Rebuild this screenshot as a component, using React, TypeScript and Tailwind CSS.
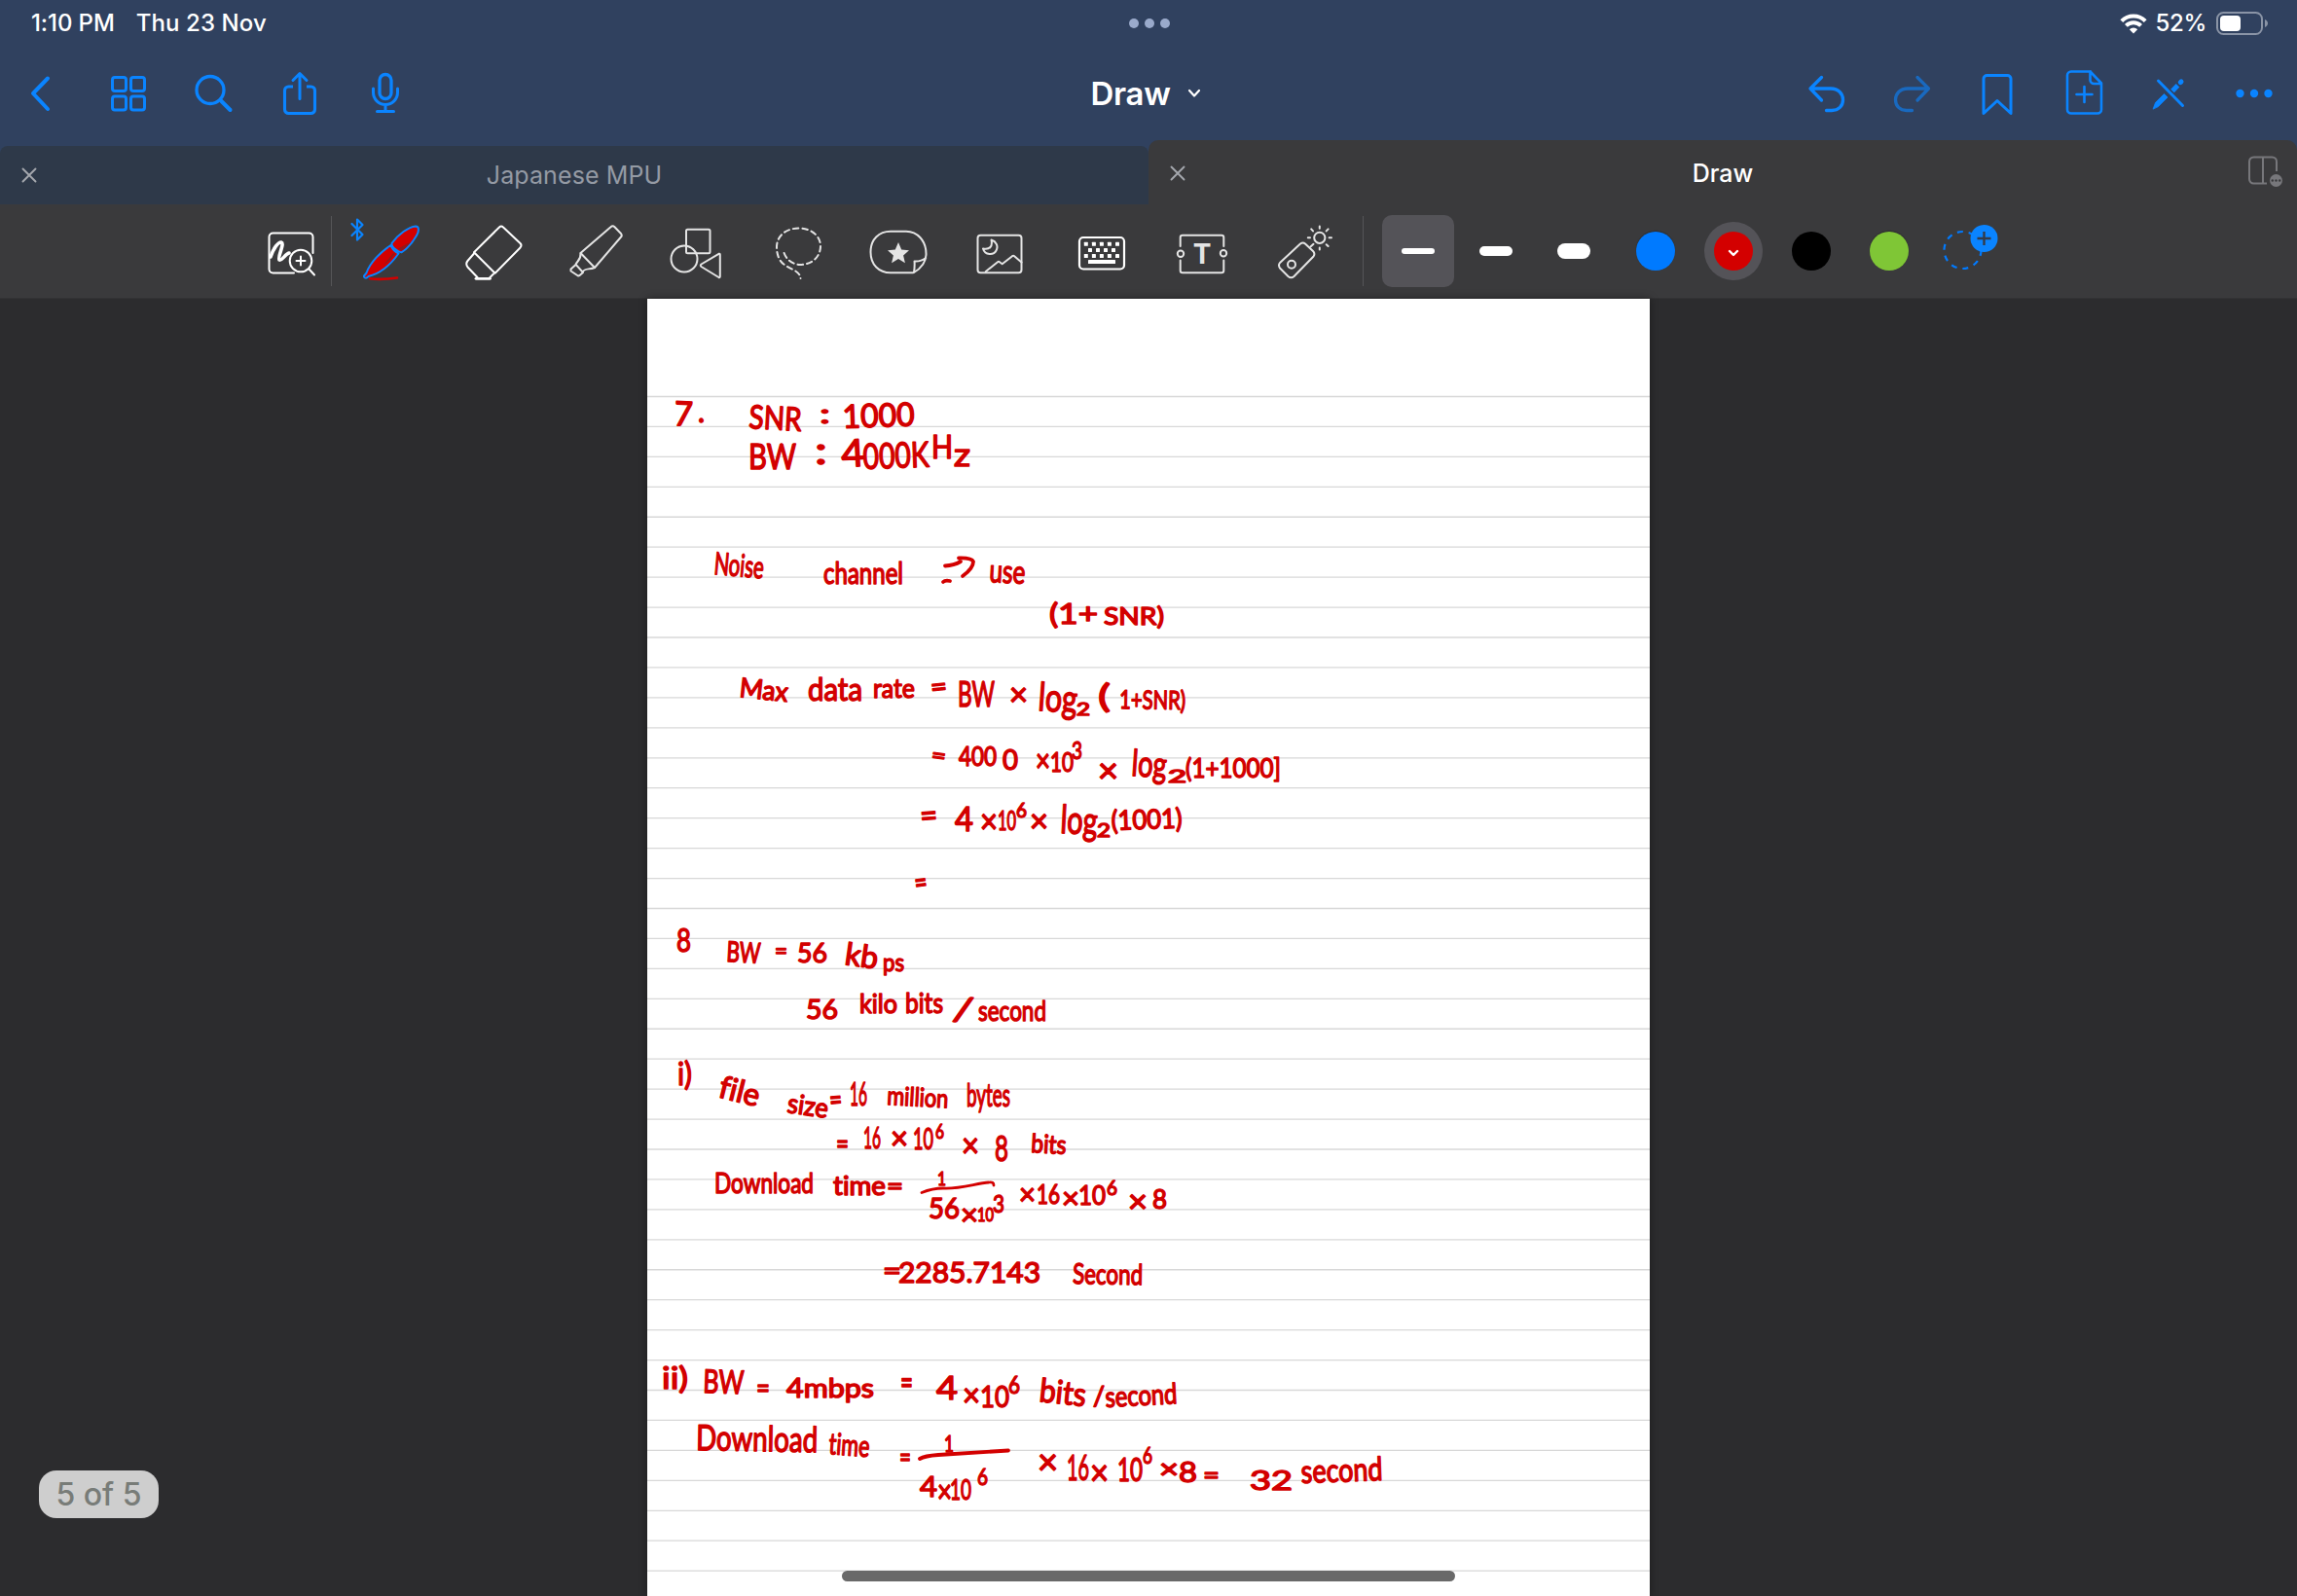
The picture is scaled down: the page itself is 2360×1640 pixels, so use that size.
import React from 'react';

const BLUE = '#0a84ff';

function NavIcon({ children, dim }: { children: React.ReactNode; dim?: boolean }) {
  return (
    <button className={dim ? 'h-24 w-[88px] shrink-0 opacity-60' : 'h-24 w-[88px] shrink-0'}>
      <svg viewBox="0 0 88 96" className="h-24 w-[88px]" fill="none" stroke={BLUE} strokeWidth="3.3" strokeLinecap="round" strokeLinejoin="round">
        {children}
      </svg>
    </button>
  );
}

function Tool({ children, bright }: { children: React.ReactNode; bright?: boolean }) {
  return (
    <button className="h-[97px] w-[104px] shrink-0">
      <svg viewBox="0 0 104 97" className="h-[97px] w-[104px]" fill="none" stroke={bright ? '#ffffff' : '#e4e4e4'} strokeWidth="2" strokeLinecap="round" strokeLinejoin="round">
        {children}
      </svg>
    </button>
  );
}

function StatusBar() {
  return (
    <div className="grid h-12 grid-cols-3 items-center pl-8 pr-[29px] text-2xl font-medium text-white">
      <div className="flex gap-[22px] whitespace-nowrap text-[24px]">
        <span className="tracking-[-0.1px]">1:10 PM</span>
        <span className="tracking-[0.1px]">Thu 23 Nov</span>
      </div>
      <div className="flex justify-center gap-1.5">
        <span className="size-2.5 rounded-full bg-[#9aaacb]" />
        <span className="size-2.5 rounded-full bg-[#9aaacb]" />
        <span className="size-2.5 rounded-full bg-[#9aaacb]" />
      </div>
      <div className="flex items-center justify-end">
        <svg viewBox="0 0 28 21" className="h-[21px] w-7" fill="none" stroke="#fff" strokeWidth="4">
          <path d="M1.8 7.6a17.3 17.3 0 0 1 24.4 0" />
          <path d="M6.4 12.4a10.8 10.8 0 0 1 15.2 0" />
          <path d="M14 20.5l-4.2-4.2a6 6 0 0 1 8.400 0z" fill="#fff" stroke="none" />
        </svg>
        <span className="ml-2 text-[24px] tracking-[-0.3px]">52%</span>
        <svg viewBox="0 0 54 24" className="ml-2.5 h-6 w-[54px]">
          <rect x="1" y="1" width="46" height="22" rx="6.5" fill="none" stroke="#8a94a6" strokeWidth="2" />
          <rect x="4" y="4" width="21" height="16" rx="4" fill="#fff" />
          <path d="M50 8c4 1.500 4 6.500 0 8z" fill="#8a94a6" />
        </svg>
      </div>
    </div>
  );
}

function NavBar() {
  return (
    <div className="grid h-24 grid-cols-3 items-center">
      <div className="flex">
        <NavIcon><path d="M49 32.500L34 48L49 64" strokeWidth="4" /></NavIcon>
        <NavIcon>
          <rect x="27.500" y="31.500" width="14" height="14" rx="2.500" strokeWidth="3" />
          <rect x="46.500" y="31.500" width="14" height="14" rx="2.500" strokeWidth="3" />
          <rect x="27.500" y="51" width="14" height="14" rx="2.500" strokeWidth="3" />
          <rect x="46.500" y="51" width="14" height="14" rx="2.500" strokeWidth="3" />
        </NavIcon>
        <NavIcon>
          <circle cx="40" cy="44.500" r="14" />
          <path d="M51 55.500L60.500 65" strokeWidth="4" />
        </NavIcon>
        <NavIcon>
          <path d="M37 41h-4.500a4 4 0 0 0-4 4v19.500a4 4 0 0 0 4 4h23a4 4 0 0 0 4-4V45a4 4 0 0 0-4-4H51" strokeWidth="3.100" strokeLinecap="butt" />
          <path d="M44 53.500V28M37 34.500L44 27.500L51 34.500" strokeWidth="3" />
        </NavIcon>
        <NavIcon>
          <rect x="38" y="28.500" width="12" height="25" rx="6" />
          <path d="M31.500 43v4a12.500 12.500 0 0 0 25 0v-4M44 60v6M35.500 66.500h17" strokeWidth="3" />
        </NavIcon>
      </div>
      <div className="flex items-center justify-center gap-[17px] pr-[6px] text-white">
        <h1 className="text-[33px] font-semibold leading-none tracking-[-0.3px]">Draw</h1>
        <svg viewBox="0 0 14 10" className="h-2.5 w-3.5" fill="none" stroke="currentColor" strokeWidth="2.2" strokeLinecap="round" strokeLinejoin="round">
          <path d="M2 2l5 5.500L12 2" />
        </svg>
      </div>
      <div className="flex justify-end">
        <NavIcon><path d="M39.500 31.500L28 43L39.500 55M28 43H49a12.500 12 0 0 1 0 22H44.500" strokeWidth="0" /><path d="M39.500 31.500L28 43L39.500 55M28 43H49C57 43 61.500 48.500 61.500 54.500C61.500 61 57 65.500 50 65.500H44.500" /></NavIcon>
        <NavIcon dim><path d="M50 31.500L61.500 43L50 55M61.500 43H40C32 43 27.500 48.500 27.500 54.500C27.500 61 32 65.500 39 65.500H44.500" /></NavIcon>
        <NavIcon><path d="M30 68.500V33a3.500 3.500 0 0 1 3.500-3.500h21A3.500 3.500 0 0 1 58 33V68.500L44 55.500z" strokeWidth="3" /></NavIcon>
        <NavIcon>
          <path d="M52 25.500H32a4 4 0 0 0-4 4v35a4 4 0 0 0 4 4h27a4 4 0 0 0 4-4V37.500L51.500 25.500v8.500a4 4 0 0 0 4 4h7M45.500 41v16M37.500 49h16" strokeWidth="2.600" />
        </NavIcon>
        <NavIcon>
          <path d="M33.500 35L58.500 60.500" strokeWidth="3" />
          <path d="M28.200 63.800L30.500 57.500L39.500 48.500L43 52L33.500 61.500z" fill={BLUE} strokeWidth="0.800" />
          <path d="M48 45.500L53.500 39.800" strokeWidth="5" strokeLinecap="butt" />
          <path d="M56.300 36.600L57 36" strokeWidth="5" />
        </NavIcon>
        <NavIcon>
          <g fill={BLUE} stroke="none">
            <circle cx="29.500" cy="48" r="4.200" />
            <circle cx="44" cy="48" r="4.200" />
            <circle cx="58.500" cy="48" r="4.200" />
          </g>
        </NavIcon>
      </div>
    </div>
  );
}

function CloseIcon() {
  return (
    <svg viewBox="0 0 16 16" className="size-4" fill="none" stroke="#a5a8ae" strokeWidth="1.900" strokeLinecap="round">
      <path d="M1.500 1.500l13 13M14.500 1.500l-13 13" />
    </svg>
  );
}

function Tabs() {
  return (
    <div className="flex h-[66px] items-end text-[25px]">
      <div className="grid h-[60px] w-[1180px] grid-cols-[59px_1fr_59px] items-center rounded-t-[8px] bg-[#2e3949]">
        <div className="flex justify-center"><CloseIcon /></div>
        <span className="pt-0.5 text-center tracking-[0.1px] text-[#949aa4]">Japanese MPU</span>
      </div>
      <div className="grid h-[66px] w-[1180px] grid-cols-[59px_1fr_59px] items-center rounded-t-[10px] bg-[#3a3a3c]">
        <div className="flex justify-center pt-0.5"><CloseIcon /></div>
        <span className="pt-1 text-center font-medium text-white">Draw</span>
        <svg viewBox="0 0 38 36" className="ml-[7px] h-9 w-[38px]" fill="none" stroke="#77777b" strokeWidth="2">
          <path d="M31 17V7a4.500 4.500 0 0 0-4.500-4.500h-19A4.500 4.500 0 0 0 3 7v18a4.500 4.500 0 0 0 4.500 4.500H21M17 2.500v27" />
          <circle cx="30.500" cy="26.500" r="6.500" fill="#77777b" stroke="none" />
          <g fill="#3a3a3c" stroke="none">
            <circle cx="26.800" cy="26.500" r="1.200" />
            <circle cx="30.500" cy="26.500" r="1.200" />
            <circle cx="34.200" cy="26.500" r="1.200" />
          </g>
        </svg>
      </div>
    </div>
  );
}

const keyRows: [number, number[]][] = [
  [40.7, [36.8, 44.9, 52.9, 60.9, 69]],
  [47, [41, 49, 57, 65]],
  [53, [36.8, 44.9, 52.9, 60.9, 69]],
];

function Toolbar() {
  return (
    <div className="flex h-[97px] items-center border-b border-[#333335] bg-[#3a3a3c] pl-[259px]">
      <svg viewBox="0 0 81 97" className="h-[97px] w-[81px] shrink-0" fill="none" stroke="#fff" strokeWidth="2" strokeLinecap="round" strokeLinejoin="round">
        <path d="M62.500 50V33.500a4 4 0 0 0-4-4H21.500a4 4 0 0 0-4 4v33a4 4 0 0 0 4 4H43" />
        <path d="M19 54C22 45 27 38.500 30 39C34 40 25.500 55 28 57C30.500 58.500 34 51 38 50" strokeWidth="3.600" />
        <circle cx="50" cy="58" r="11.300" />
        <path d="M50 53.500v9M45.500 58h9M58.500 66.500L64 72.500" />
      </svg>
      <div className="h-[72px] w-px shrink-0 bg-[#555558]" />
      <div className="w-2.5 shrink-0" />
      <Tool>
        <g stroke={BLUE} fill="#d30000" strokeWidth="2">
          <path d="M51.500 40C58 31 69 23 76 22.500C80 22.500 79.500 28 77 32C73 39 68 45 62 49C59 50 51 44 51.500 40z" />
          <path d="M50.500 42C40 49 29 60 25.500 70.500L23 73.500C22.500 76 26 76.500 27.500 74C40 71 51 61 58.500 50.500C55 49 52 46 50.500 42z" />
        </g>
        <path d="M71 38.500C68 43 65 46 61.500 47.500L58 45.500zM55 50.500L50 57L43 62.500L53 50z" fill="#8e1a1c" stroke="none" />
        <path d="M29 76.200C38 77.500 50 76.500 57 75.500" stroke="#d30000" strokeWidth="2.600" />
        <path d="M10.500 20L21.500 31L16 36.500V15.500L21.500 21L10.500 32" stroke={BLUE} strokeWidth="2.200" />
      </Tool>
      <Tool bright>
        <path d="M32 49.300L58 23.500q2-2 4 0L79.500 40q2 2 0 4.500L53.600 70.700z" />
        <path d="M32 50.500L25.500 58q-2.500 3 0 6.500L35.500 75M52 71.500L48 75.500" />
        <path d="M34 76.300H48.500" strokeWidth="2.800" />
      </Tool>
      <Tool>
        <path d="M37.500 50L68.500 23.200q2-2 4 0L79 30q1.500 2 0 3.500L52 65z" />
        <path d="M37.500 50.500C38 57 34 58 32.500 61.700L39.600 69.500C42 65 46 67.500 52 65M32 62.500L27.500 66.500v2l7.500 5l1.500-.5L40 70" />
      </Tool>
      <Tool>
        <rect x="42" y="25.700" width="24.500" height="24.500" rx="1.500" />
        <circle cx="40" cy="56" r="13.500" />
        <path d="M57.500 61.500L75.500 50.800q1.300-.5 1.300 1V74q0 1.500-1.300 1L57.500 64q-1.500-1.200 0-2.500z" />
      </Tool>
      <Tool>
        <path d="M38.600 50C41 57 48 62 55 62C67 62 76 54 76 43C76 32 66 24.500 54 24.500C41 24.500 31 32 31 44C31 52 34 59 39 62C45 67 55 68 55.500 76" strokeDasharray="5.500 4" />
      </Tool>
      <Tool>
        <path d="M68 70C73 67 80 61 80.500 52C81 37 71 27.700 60 27.700H44C32 27.700 23.500 36 23.500 49S32 70.300 44 70.300H60Q66 70.300 68 70Q69 63 68.500 58.500Q75 59 80.200 55" />
        <path d="M52 39l3.200 7.500 7.800.7-5.900 5.300 1.800 7.800-6.900-4.200-6.900 4.200 1.800-7.800-5.900-5.300 7.800-.7z" fill="#e4e4e4" stroke="none" />
      </Tool>
      <Tool>
        <rect x="29.500" y="31.700" width="45" height="38.600" rx="3" />
        <path d="M43.500 36.500C45 43 42 47 35 45.500C37 52.500 46 52.500 48.500 47.500C51 43 48.500 38 43.500 36.500zM37.800 69L50 59.200q1-.7 2 0L54.700 61.200L65 53.200q1.200-.8 2.200 0L74.500 59.500" />
      </Tool>
      <Tool bright>
        <rect x="30" y="34" width="46" height="32.500" rx="4" strokeWidth="2.200" />
        <g fill="#fff" stroke="none">
          {keyRows.map(([y, xs]) => xs.map((x) => <rect key={x + '-' + y} x={x - 2} y={y - 2} width="4" height="4" rx="0.5" />))}
          <rect x="39" y="57" width="28" height="4" rx="0.5" />
        </g>
      </Tool>
      <Tool>
        <path d="M29.700 43V34q0-2.300 2.300-2.300H72q2.300 0 2.300 2.300V43M29.700 57.500V68q0 2.300 2.300 2.300H72q2.300 0 2.300-2.300V57.500" />
        <circle cx="30" cy="50.700" r="3.200" />
        <circle cx="74" cy="50.200" r="3.200" />
        <text x="52" y="61" textAnchor="middle" fontFamily="Inter" fontWeight="700" fontSize="28" fill="#e4e4e4" stroke="none">T</text>
      </Tool>
      <Tool>
        <path d="M49 40.500q2.700-2 5 0L62 48q2.500 2.500 .5 5.500L42.500 74q-3 2.500-6 0L28 65.500q-2-3 0-5.500z" />
        <circle cx="40" cy="61.700" r="4" />
        <circle cx="68.800" cy="34.300" r="5.600" />
        <path d="M59.500 43.500L62.500 40.800M68.800 24.800V22.500M68.800 44.500V46.500M78.600 34.300H81M59 34.300H56.800M75.700 27.400L77.600 25.400M75.700 41.200L77.600 43M62 27.400L60.200 25.400" />
      </Tool>
      <div className="w-[9px] shrink-0" />
      <div className="h-[72px] w-px shrink-0 bg-[#555558]" />
      <div className="flex pl-4">
        <div className="flex w-20 justify-center">
          <div className="flex h-[74px] w-[74px] items-center justify-center rounded-[10px] bg-[#545358]">
            <span className="h-1.5 w-[34px] rounded-full bg-white" />
          </div>
        </div>
        <div className="flex w-20 items-center justify-center"><span className="h-2.5 w-[34px] rounded-full bg-white" /></div>
        <div className="flex w-20 items-center justify-center"><span className="h-4 w-[34px] rounded-full bg-white" /></div>
      </div>
      <div className="flex items-center pl-1">
        <div className="flex w-20 justify-center"><span className="size-10 rounded-full bg-[#007aff] shadow-[0_-1px_1px_rgba(0,0,0,0.25)]" /></div>
        <div className="flex w-20 justify-center">
          <span className="flex size-[60px] items-center justify-center rounded-full bg-[#545358]">
            <span className="flex size-10 items-center justify-center rounded-full bg-[#d30000]">
              <svg viewBox="0 0 12 8" className="mt-1 h-2 w-3" fill="none" stroke="#fff" strokeWidth="2.400" strokeLinecap="round" strokeLinejoin="round">
                <path d="M2 2l4 4l4-4" />
              </svg>
            </span>
          </span>
        </div>
        <div className="flex w-20 justify-center"><span className="size-10 rounded-full bg-black" /></div>
        <div className="flex w-20 justify-center"><span className="size-10 rounded-full bg-[#7fc636] shadow-[0_-1px_1px_rgba(0,0,0,0.25)]" /></div>
        <svg viewBox="0 0 80 97" className="h-[97px] w-20" fill="none">
          <circle cx="35.500" cy="47" r="19" stroke="#007aff" strokeWidth="2.200" strokeDasharray="6 5.900" />
          <circle cx="57.500" cy="35" r="14" fill={BLUE} />
          <path d="M50.500 35h14M57.500 28v14" stroke="#343b48" strokeWidth="2.400" />
        </svg>
      </div>
    </div>
  );
}

// text, left, baseline, width, capital height, tilt in degrees
type Ink = [string, number, number, number, number, number?];

const notes: Ink[] = [
  ['7', 692, 437, 19, 25, 3], ['.', 717, 434, 7, 22],
  ['SNR', 769, 440, 54, 24, 3], [':', 842, 435, 11, 20], ['1000', 866, 440, 74, 24, -2],
  ['BW', 769, 482, 49, 26], [':', 837, 477, 13, 28], ['4', 865, 480, 24, 28, -3], ['000K', 887, 482, 68, 26, -2], ['H', 957, 471, 22, 23], ['z', 980, 479, 17, 24],
  ['Noise', 733, 590, 51, 23, 5], ['channel', 846, 600, 82, 22], ['use', 1016, 598, 37, 24, 3],
  ['(1+', 1078, 641, 50, 21], ['SNR)', 1134, 642, 62, 18],
  ['Max', 759, 716, 50, 20, 6], ['data', 830, 720, 56, 24], ['rate', 897, 717, 43, 20], ['=', 957, 716, 17, 20, -6],
  ['BW', 984, 726, 38, 26], ['×', 1037, 725, 19, 23], ['log', 1066, 730, 40, 29, 4], ['2', 1106, 735, 14, 13],
  ['(', 1128, 727, 13, 24], ['1+SNR)', 1150, 728, 68, 19, 1],
  ['=', 956, 783, 15, 16, 8], ['400', 985, 787, 39, 19], ['0', 1030, 791, 16, 21], ['×', 1064, 793, 15, 24], ['10', 1079, 793, 24, 19],
  ['3', 1101, 780, 11, 18], ['×', 1128, 804, 21, 25], ['log', 1162, 797, 36, 27, 4], ['2', 1200, 804, 19, 13], ['(1+1000]', 1218, 799, 98, 20],
  ['=', 946, 850, 18, 24, -4], ['4', 981, 854, 19, 25], ['×', 1007, 856, 18, 25], ['10', 1025, 853, 19, 19], ['6', 1044, 840, 11, 15],
  ['×', 1058, 855, 19, 24], ['log', 1089, 856, 38, 29, 3], ['2', 1127, 860, 14, 14], ['(1001)', 1142, 853, 73, 20, -2],
  ['=', 941, 918, 13, 22, -8],
  ['8', 695, 978, 15, 23], ['BW', 746, 988, 35, 21, 3], ['=', 796, 985, 13, 16], ['56', 819, 989, 31, 20],
  ['kb', 867, 991, 34, 23, 8], ['ps', 907, 998, 22, 18],
  ['56', 828, 1047, 33, 20], ['kilo', 883, 1041, 39, 20], ['bits', 930, 1041, 39, 21], ['/', 978, 1048, 20, 25, 8], ['second', 1005, 1049, 70, 21],
  ['i)', 696, 1115, 15, 24], ['file', 737, 1127, 42, 23, 14], ['size', 808, 1143, 42, 20, 8], ['=', 853, 1141, 13, 22, -5], ['16', 873, 1136, 18, 23],
  ['million', 911, 1135, 63, 19, 3], ['bytes', 993, 1137, 45, 23],
  ['=', 859, 1186, 13, 22], ['16', 887, 1180, 18, 22], ['×', 915, 1181, 18, 24], ['10', 938, 1181, 21, 22], ['6', 961, 1170, 9, 15],
  ['×', 988, 1189, 18, 25], ['8', 1022, 1193, 14, 26], ['bits', 1059, 1184, 36, 19, 3],
  ['Download', 734, 1226, 102, 21], ['time', 856, 1228, 54, 19], ['=', 911, 1228, 17, 18], ['1', 963, 1218, 9, 14],
  ['56', 954, 1252, 32, 21], ['×', 987, 1259, 18, 22], ['10', 1004, 1255, 17, 14], ['3', 1020, 1246, 12, 18],
  ['×', 1047, 1238, 17, 22], ['16', 1065, 1237, 24, 19], ['×', 1091, 1242, 18, 22], ['10', 1108, 1238, 28, 19], ['6', 1137, 1228, 11, 15],
  ['×', 1159, 1246, 20, 23], ['8', 1184, 1242, 15, 19],
  ['=', 907, 1315, 19, 20], ['2285.7143', 923, 1318, 146, 21], ['Second', 1102, 1319, 72, 21, 1],
  ['ii)', 680, 1427, 27, 22], ['BW', 722, 1431, 42, 24, 2], ['=', 777, 1437, 14, 22], ['4mbps', 808, 1436, 90, 20],
  ['=', 925, 1433, 13, 26], ['4', 962, 1438, 22, 24], ['×', 989, 1445, 18, 24], ['10', 1007, 1446, 30, 22], ['6', 1036, 1432, 12, 18],
  ['bits', 1067, 1440, 48, 24, 6], ['/', 1123, 1444, 12, 19], ['second', 1136, 1446, 74, 21, -3],
  ['Download', 715, 1490, 125, 26, 1], ['time', 851, 1494, 42, 22, 4], ['=', 924, 1508, 12, 22], ['1', 970, 1492, 10, 17],
  ['4', 945, 1538, 18, 21], ['×', 963, 1544, 15, 24], ['10', 976, 1541, 22, 21], ['6', 1004, 1526, 11, 17],
  ['×', 1066, 1515, 21, 27], ['16', 1096, 1521, 23, 26], ['×', 1120, 1526, 19, 27], ['10', 1148, 1522, 26, 23], ['6', 1174, 1504, 10, 16],
  ['×', 1191, 1519, 20, 20], ['8', 1211, 1523, 19, 21], ['=', 1236, 1525, 17, 20], ['32', 1284, 1531, 44, 20], ['second', 1337, 1524, 84, 24, -2],
];

function Notebook() {
  const rules = Array.from({ length: 40 }, (_, i) => 407.5 + i * 30.94);
  return (
    <svg viewBox="665 307 1030 1333" className="h-[1333px] w-[1030px] shrink-0 bg-white shadow-[0_0_8px_rgba(0,0,0,0.4)]">
      {rules.map((y) => <line key={y} x1="665" x2="1695" y1={y} y2={y} stroke="#d8d8d8" strokeWidth="1.300" />)}
      <g fill="#d30000" stroke="#d30000" strokeWidth="1.500" strokeLinejoin="round" fontFamily="Lato, 'Open Sans', sans-serif" className="font-normal [font-variant-ligatures:none]">
        {notes.map(([text, x, y, width, cap, tilt = 0]) => (
          <text key={x + '-' + y} x={x} y={y} fontSize={cap / 0.72} textLength={width} lengthAdjust="spacingAndGlyphs" transform={`rotate(${tilt} ${x} ${y})`}>
            {text}
          </text>
        ))}
      </g>
      <g fill="none" stroke="#d30000" strokeWidth="3.8" strokeLinecap="round" strokeLinejoin="round">
        <path d="M971 581.500Q980 581 987 577M985 573.500Q998 573 1000 577Q1000 584 989 592M969 598Q971 596 976 597" />
        <path d="M947 1225.500Q958 1221 969 1221C986 1222 1003 1216 1016 1215Q1021 1214 1021 1218" strokeWidth="2.800" />
        <path d="M945 1499Q950 1496 964 1495L1036 1490.500" />
      </g>
    </svg>
  );
}

export default function App() {
  return (
    <div className="relative flex h-[1640px] w-[2360px] flex-col overflow-hidden bg-[#2c2c2e] font-['Inter',sans-serif]">
      <header className="bg-[#30415f]">
        <StatusBar />
        <NavBar />
        <Tabs />
      </header>
      <Toolbar />
      <main className="flex justify-center">
        <Notebook />
      </main>
      <div className="absolute bottom-20 left-10 flex h-[49px] w-[123px] items-center justify-center rounded-[18px] bg-[#cecece] text-[32px] font-medium text-[#787c78]">5 of 5</div>
      <div className="absolute bottom-[15px] left-[865px] h-[11px] w-[630px] rounded-full bg-[#696969]" />
    </div>
  );
}
